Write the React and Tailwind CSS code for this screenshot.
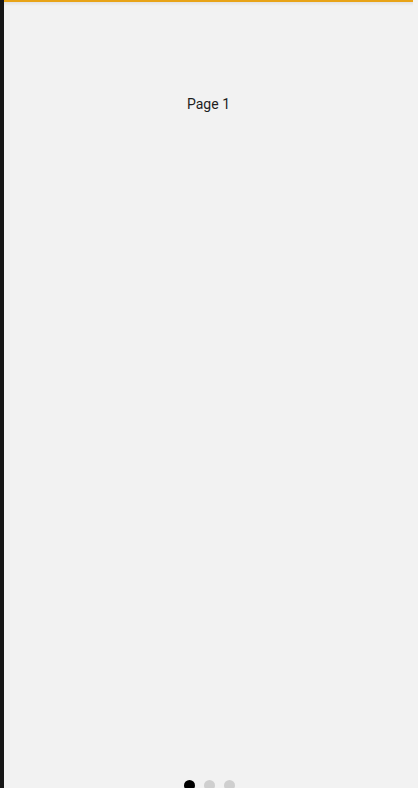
export default function App() {
  return (
    <div className="flex h-[788px] w-[418px] overflow-hidden bg-[#f2f2f2]" style={{ fontFamily: "Roboto, 'Noto Sans', sans-serif" }}>
      <div className="h-full w-[4px] shrink-0 bg-[#161616]" />
      <div className="relative flex h-full w-[409px] shrink-0 flex-col bg-[#f2f2f2]">
        <div className="h-[2px] w-full bg-[#e8a317]" />
        <div className="h-[4px] w-full bg-gradient-to-b from-[#e2e2e2] to-[#f2f2f2]" />
        <div className="flex justify-center pt-[88px]">
          <span className="text-[14px] leading-[20px] text-[#1e1e1e]">Page 1</span>
        </div>
        <div className="flex-1" />
        <div className="flex h-[18px] justify-center gap-[9px] pt-[10px] pl-[1px]">
          <span className="h-[11px] w-[11px] rounded-full bg-black" />
          <span className="h-[11px] w-[11px] rounded-full bg-[#cfcfcf]" />
          <span className="h-[11px] w-[11px] rounded-full bg-[#cfcfcf]" />
        </div>
      </div>
    </div>
  );
}
